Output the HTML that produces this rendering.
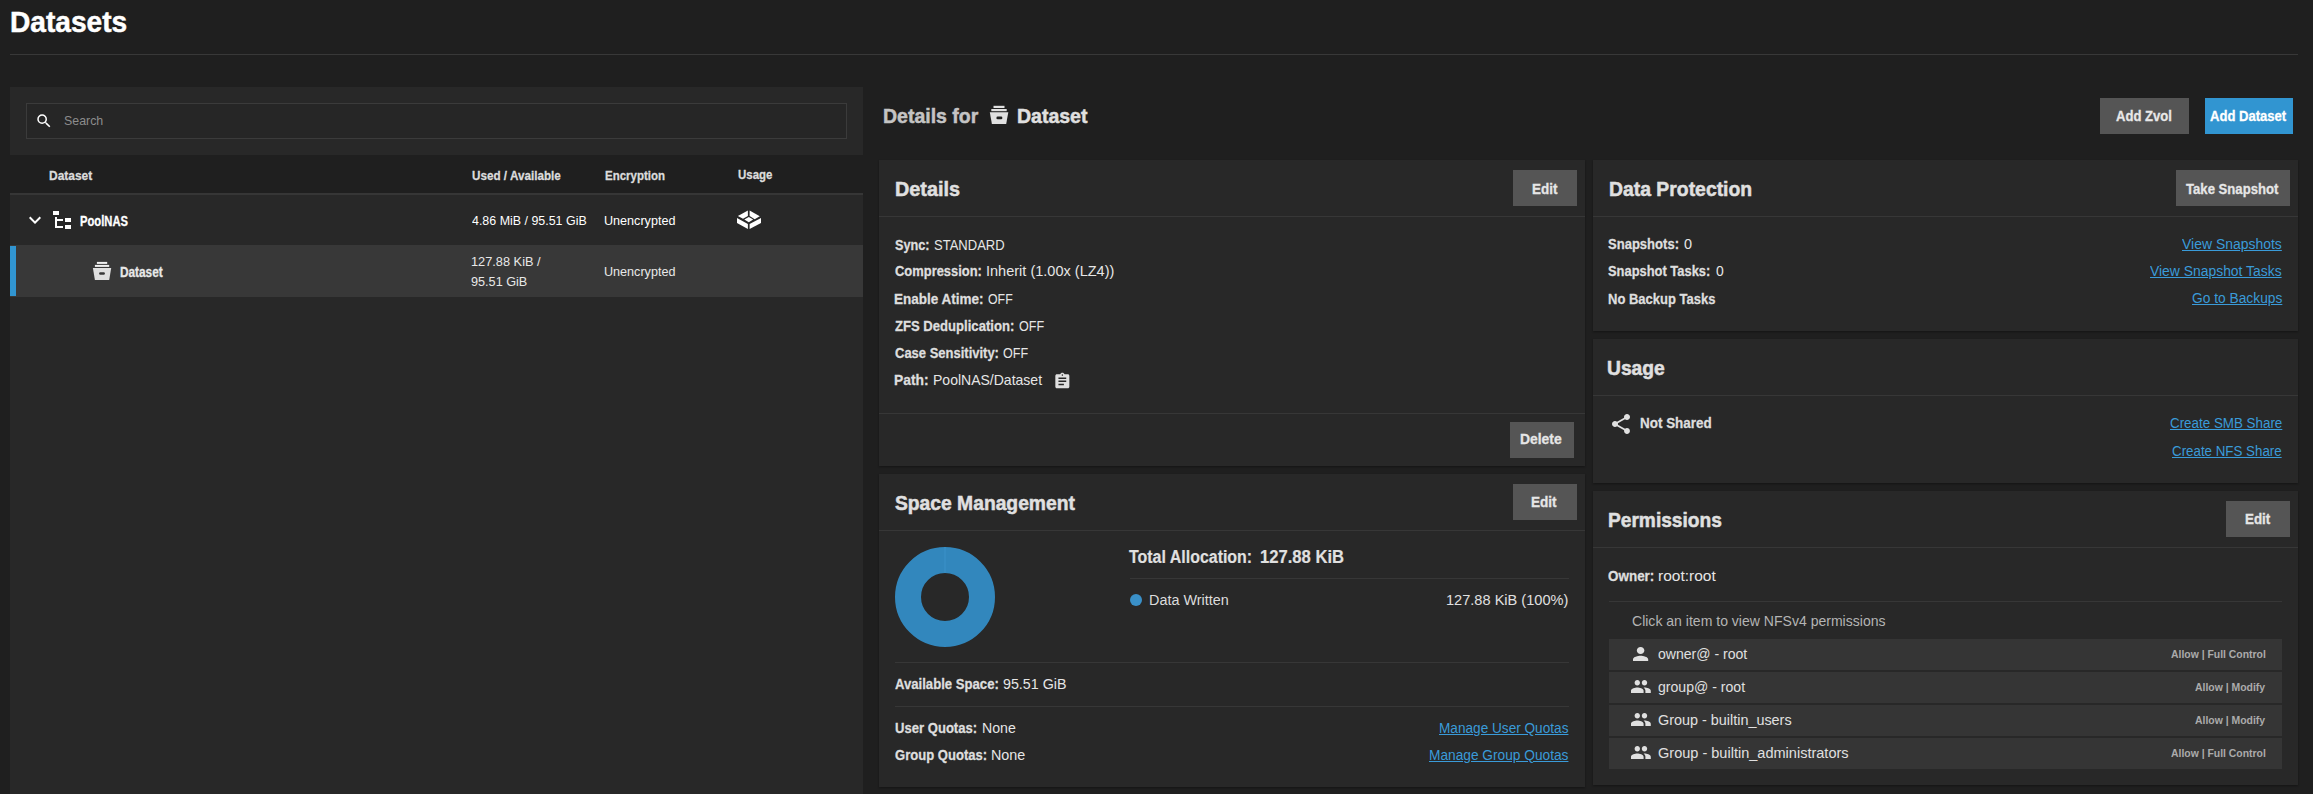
<!DOCTYPE html>
<html><head><meta charset="utf-8">
<style>
html,body{margin:0;padding:0;}
body{width:2313px;height:794px;overflow:hidden;background:#1f1f1f;position:relative;font-family:"Liberation Sans",sans-serif;}
.t{position:absolute;white-space:pre;transform-origin:0 0;}
.b{position:absolute;}
.card{position:absolute;background:#282828;box-shadow:0 1px 2px rgba(0,0,0,.35);}
.hr{position:absolute;height:1px;background:#373737;}
.btn{position:absolute;background:#555555;height:36px;}
svg{position:absolute;overflow:visible;}
</style></head><body>
<!-- title rule -->
<div class="hr" style="left:10px;top:54px;width:2288px;background:#383838"></div>
<!-- left panel -->
<div class="b" style="left:10px;top:87px;width:853px;height:707px;background:#282828"></div>
<div class="b" style="left:26px;top:103px;width:819px;height:34px;border:1px solid #3b3b3b;background:#262626"></div>
<div class="b" style="left:10px;top:155px;width:853px;height:38px;background:#1f1f1f"></div>
<div class="b" style="left:10px;top:193px;width:853px;height:2px;background:#363636"></div>
<div class="b" style="left:10px;top:245px;width:853px;height:52px;background:#383838"></div>
<div class="b" style="left:10px;top:246px;width:6px;height:50px;background:#3195d1"></div>
<!-- search icon -->
<svg style="left:34.5px;top:111.5px" width="18" height="18" viewBox="0 0 24 24"><path fill="#ffffff" d="M15.5 14h-.79l-.28-.27A6.471 6.471 0 0 0 16 9.5 6.5 6.5 0 1 0 9.5 16c1.61 0 3.09-.59 4.23-1.57l.27.28v.79l5 4.99L20.49 19l-4.99-5zm-6 0C7.01 14 5 11.99 5 9.5S7.01 5 9.5 5 14 7.01 14 9.5 11.99 14 9.5 14z"/></svg>
<!-- chevron -->
<svg style="left:23px;top:208px" width="24" height="24" viewBox="0 0 24 24"><path fill="#ffffff" d="M16.59 8.59L12 13.17 7.41 8.59 6 10l6 6 6-6z"/></svg>
<!-- file tree icon -->
<svg style="left:50px;top:208px" width="24" height="24" viewBox="0 0 24 24"><path fill="#ffffff" d="M3,3H9V7H3V3M15,10H21V14H15V10M15,17H21V21H15V17M13,13H7V18H13V20H7L5,20V9H7V11H13V13Z"/></svg>
<!-- dataset icon (row) -->
<svg style="left:0;top:0" width="1" height="1"><g fill="#e0e0e0">
<rect x="96.9" y="261.9" width="10.3" height="2" fill="#f0f0f0"/>
<rect x="94.9" y="264.9" width="14.3" height="2" fill="#f0f0f0"/>
<path d="M92.9 267.9H111.2L109.2 280H94.9Z"/>
</g><rect x="99.1" y="272.3" width="5.8" height="2.5" rx="1.2" fill="#383838"/></svg>
<!-- usage icon -->
<svg style="left:0;top:0" width="1" height="1"><g fill="#ffffff">
<path d="M737.9 216.1L747.9 210.5V216L743 218.8Z"/>
<path d="M749.6 210.5L759.8 216.3L754.7 219.2L749.6 216Z"/>
<path d="M744.3 219.5L748.8 216.9L753.2 219.5L748.8 222.2Z"/>
<path d="M737 218L747.9 223.9V229L737 222.9Z"/>
<path d="M749.6 223.9L761 218V222.9L749.6 229Z"/>
</g></svg>

<!-- details header icon -->
<svg style="left:0;top:0" width="1" height="1"><g fill="#e0e0e0">
<rect x="993.5" y="105.8" width="11" height="2.2"/>
<rect x="991.3" y="109" width="15.4" height="2.2"/>
<path d="M989.8 112.2H1008.3L1006.2 124H991.9Z"/>
</g><rect x="996.4" y="116.6" width="6" height="2.6" rx="1.3" fill="#1f1f1f"/></svg>

<!-- top buttons -->
<div class="btn" style="left:2100px;top:98px;width:89px"></div>
<div class="btn" style="left:2205px;top:98px;width:88px;background:#3195d1"></div>

<!-- cards -->
<div class="card" style="left:879px;top:160px;width:706px;height:306px"></div>
<div class="card" style="left:879px;top:474px;width:706px;height:313px"></div>
<div class="card" style="left:1593px;top:160px;width:705px;height:171px"></div>
<div class="card" style="left:1593px;top:339px;width:705px;height:144px"></div>
<div class="card" style="left:1593px;top:491px;width:705px;height:294px"></div>
<!-- card dividers -->
<div class="hr" style="left:879px;top:216px;width:706px"></div>
<div class="hr" style="left:879px;top:413px;width:706px"></div>
<div class="hr" style="left:879px;top:530px;width:706px"></div>
<div class="hr" style="left:1593px;top:216px;width:705px"></div>
<div class="hr" style="left:1593px;top:395px;width:705px"></div>
<div class="hr" style="left:1593px;top:547px;width:705px"></div>
<div class="hr" style="left:1130px;top:578px;width:439px"></div>
<div class="hr" style="left:895px;top:662px;width:674px"></div>
<div class="hr" style="left:895px;top:706px;width:674px"></div>
<div class="hr" style="left:1609px;top:601px;width:673px"></div>
<!-- card buttons -->
<div class="btn" style="left:1513px;top:170px;width:64px"></div>
<div class="btn" style="left:2176px;top:170px;width:114px"></div>
<div class="btn" style="left:1510px;top:422px;width:64px"></div>
<div class="btn" style="left:1513px;top:484px;width:64px"></div>
<div class="btn" style="left:2226px;top:501px;width:64px"></div>

<!-- clipboard icon -->
<svg style="left:1052.7px;top:372.2px" width="18.7" height="18.7" viewBox="0 0 24 24"><path fill="#e0e0e0" d="M19 3h-4.18C14.4 1.84 13.3 1 12 1c-1.3 0-2.4.84-2.82 2H5c-1.1 0-2 .9-2 2v14c0 1.1.9 2 2 2h14c1.1 0 2-.9 2-2V5c0-1.1-.9-2-2-2zm-7 0c.55 0 1 .45 1 1s-.45 1-1 1-1-.45-1-1 .45-1 1-1zm2 14H7v-2h7v2zm3-4H7v-2h10v2zm0-4H7V7h10v2z"/></svg>
<!-- share icon -->
<svg style="left:1608.7px;top:411.7px" width="24" height="24" viewBox="0 0 24 24"><path fill="#e0e0e0" d="M18 16.08c-.76 0-1.440.3-1.96.77L8.91 12.7c.05-.23.09-.46.09-.7s-.04-.47-.09-.7l7.05-4.11c.54.5 1.25.81 2.04.81 1.66 0 3-1.34 3-3s-1.340-3-3-3-3 1.34-3 3c0 .24.04.47.09.7L8.04 9.81C7.5 9.31 6.79 9 6 9c-1.66 0-3 1.34-3 3s1.34 3 3 3c.79 0 1.5-.31 2.04-.81l7.12 4.16c-.05.21-.08.43-.08.65 0 1.61 1.31 2.92 2.92 2.92 1.61 0 2.920-1.31 2.92-2.92s-1.31-2.92-2.92-2.92z"/></svg>

<!-- donut -->
<svg style="left:0;top:0" width="1" height="1">
<circle cx="945" cy="597" r="37" fill="none" stroke="#3287bd" stroke-width="26"/>
<rect x="944.5" y="547" width="1" height="26" fill="#3a91c9"/>
<circle cx="1136" cy="600" r="6" fill="#3a90c8"/>
</svg>

<!-- ACE rows -->
<div class="b" style="left:1609px;top:639px;width:673px;height:31px;background:#353535"></div>
<div class="b" style="left:1609px;top:672px;width:673px;height:31px;background:#353535"></div>
<div class="b" style="left:1609px;top:705px;width:673px;height:31px;background:#353535"></div>
<div class="b" style="left:1609px;top:738px;width:673px;height:31px;background:#353535"></div>
<!-- person icon -->
<svg style="left:1633px;top:646.6px" width="15.2" height="14" viewBox="4 4 16 16" preserveAspectRatio="none"><path fill="#e0e0e0" d="M12 12c2.21 0 4-1.79 4-4s-1.79-4-4-4-4 1.79-4 4 1.79 4 4 4zm0 2c-2.67 0-8 1.34-8 4v2h16v-2c0-2.66-5.330-4-8-4z" transform="translate(0 0)"/></svg>
<!-- group icons -->
<svg style="left:1630.8px;top:680px" width="19.8" height="13" viewBox="1 5 22 14" preserveAspectRatio="none"><path fill="#e0e0e0" d="M16 11c1.66 0 2.99-1.34 2.99-3S17.66 5 16 5c-1.66 0-3 1.34-3 3s1.34 3 3 3zm-8 0c1.66 0 2.99-1.34 2.99-3S9.66 5 8 5C6.34 5 5 6.34 5 8s1.34 3 3 3zm0 2c-2.33 0-7 1.17-7 3.5V19h14v-2.5c0-2.33-4.67-3.5-7-3.5zm8 0c-.29 0-.62.02-.97.05 1.16.84 1.970 1.97 1.97 3.45V19h6v-2.5c0-2.33-4.67-3.5-7-3.5z"/></svg>
<svg style="left:1630.8px;top:713px" width="19.8" height="13" viewBox="1 5 22 14" preserveAspectRatio="none"><path fill="#e0e0e0" d="M16 11c1.66 0 2.99-1.34 2.99-3S17.66 5 16 5c-1.660 0-3 1.34-3 3s1.34 3 3 3zm-8 0c1.66 0 2.99-1.34 2.99-3S9.66 5 8 5C6.34 5 5 6.34 5 8s1.34 3 3 3zm0 2c-2.33 0-7 1.17-7 3.5V19h14v-2.5c0-2.33-4.67-3.5-7-3.5zm8 0c-.29 0-.62.02-.97.05 1.16.84 1.97 1.97 1.97 3.45V19h6v-2.5c0-2.33-4.67-3.5-7-3.5z"/></svg>
<svg style="left:1630.8px;top:746px" width="19.8" height="13" viewBox="1 5 22 14" preserveAspectRatio="none"><path fill="#e0e0e0" d="M16 11c1.66 0 2.99-1.34 2.99-3S17.66 5 16 5c-1.66 0-3 1.34-3 3s1.34 3 3 3zm-8 0c1.66 0 2.99-1.34 2.99-3S9.66 5 8 5C6.34 5 5 6.34 5 8s1.34 3 3 3zm0 2c-2.33 0-7 1.17-7 3.5V19h14v-2.5c0-2.33-4.67-3.5-7-3.5zm8 0c-.29 0-.62.02-.97.05 1.16.84 1.97 1.97 1.97 3.45V19h6v-2.5c0-2.33-4.67-3.5-7-3.5z"/></svg>

<span class="t" style="left:10.40px;top:7.10px;font-size:30px;line-height:30px;font-weight:bold;color:#ffffff;transform:scaleX(0.9372);-webkit-text-stroke:0.5px #ffffff;">Datasets</span>
<span class="t" style="left:64.46px;top:113.90px;font-size:13px;line-height:13px;font-weight:normal;color:#8c8c8c;transform:scaleX(0.9515);">Search</span>
<span class="t" style="left:49.07px;top:168.70px;font-size:13.5px;line-height:13.5px;font-weight:bold;color:#dcdcdc;transform:scaleX(0.8868);-webkit-text-stroke:0.3px #dcdcdc;">Dataset</span>
<span class="t" style="left:472.29px;top:168.60px;font-size:13.5px;line-height:13.5px;font-weight:bold;color:#dcdcdc;transform:scaleX(0.8657);-webkit-text-stroke:0.3px #dcdcdc;">Used / Available</span>
<span class="t" style="left:605.11px;top:168.60px;font-size:13.5px;line-height:13.5px;font-weight:bold;color:#dcdcdc;transform:scaleX(0.8510);-webkit-text-stroke:0.3px #dcdcdc;">Encryption</span>
<span class="t" style="left:737.95px;top:168.30px;font-size:13.5px;line-height:13.5px;font-weight:bold;color:#dcdcdc;transform:scaleX(0.8492);-webkit-text-stroke:0.3px #dcdcdc;">Usage</span>
<span class="t" style="left:79.94px;top:213.80px;font-size:14px;line-height:14px;font-weight:bold;color:#ffffff;transform:scaleX(0.8020);-webkit-text-stroke:0.3px #ffffff;">PoolNAS</span>
<span class="t" style="left:471.66px;top:215.20px;font-size:12.5px;line-height:12.5px;font-weight:normal;color:#ffffff;transform:scaleX(0.9943);">4.86 MiB / 95.51 GiB</span>
<span class="t" style="left:603.78px;top:215.10px;font-size:12.5px;line-height:12.5px;font-weight:normal;color:#ffffff;transform:scaleX(1.0077);">Unencrypted</span>
<span class="t" style="left:119.61px;top:264.60px;font-size:14px;line-height:14px;font-weight:bold;color:#e8e8e8;transform:scaleX(0.8433);-webkit-text-stroke:0.3px #e8e8e8;">Dataset</span>
<span class="t" style="left:470.96px;top:256.10px;font-size:12.5px;line-height:12.5px;font-weight:normal;color:#e8e8e8;transform:scaleX(1.0217);">127.88 KiB /</span>
<span class="t" style="left:470.96px;top:276.00px;font-size:12.5px;line-height:12.5px;font-weight:normal;color:#e8e8e8;transform:scaleX(1.0126);">95.51 GiB</span>
<span class="t" style="left:603.78px;top:265.90px;font-size:12.5px;line-height:12.5px;font-weight:normal;color:#e8e8e8;transform:scaleX(1.0077);">Unencrypted</span>
<span class="t" style="left:883.44px;top:105.20px;font-size:21px;line-height:21px;font-weight:bold;color:#c4c4c4;transform:scaleX(0.9281);-webkit-text-stroke:0.5px #c4c4c4;">Details for</span>
<span class="t" style="left:1017.30px;top:105.20px;font-size:21px;line-height:21px;font-weight:bold;color:#e0e0e0;transform:scaleX(0.9287);-webkit-text-stroke:0.5px #e0e0e0;">Dataset</span>
<span class="t" style="left:2116.29px;top:107.50px;font-size:15.5px;line-height:15.5px;font-weight:bold;color:#e8e8e8;transform:scaleX(0.8425);-webkit-text-stroke:0.3px #e8e8e8;">Add Zvol</span>
<span class="t" style="left:2210.45px;top:107.60px;font-size:15.5px;line-height:15.5px;font-weight:bold;color:#ffffff;transform:scaleX(0.8427);-webkit-text-stroke:0.3px #ffffff;">Add Dataset</span>
<span class="t" style="left:895.28px;top:179.00px;font-size:20.5px;line-height:20.5px;font-weight:bold;color:#e0e0e0;transform:scaleX(0.9657);-webkit-text-stroke:0.5px #e0e0e0;">Details</span>
<span class="t" style="left:1608.63px;top:179.40px;font-size:20.5px;line-height:20.5px;font-weight:bold;color:#e0e0e0;transform:scaleX(0.9449);-webkit-text-stroke:0.5px #e0e0e0;">Data Protection</span>
<span class="t" style="left:1607.44px;top:358.00px;font-size:20.5px;line-height:20.5px;font-weight:bold;color:#e0e0e0;transform:scaleX(0.9380);-webkit-text-stroke:0.5px #e0e0e0;">Usage</span>
<span class="t" style="left:895.21px;top:493.00px;font-size:20.5px;line-height:20.5px;font-weight:bold;color:#e0e0e0;transform:scaleX(0.9399);-webkit-text-stroke:0.5px #e0e0e0;">Space Management</span>
<span class="t" style="left:1607.62px;top:509.80px;font-size:20.5px;line-height:20.5px;font-weight:bold;color:#e0e0e0;transform:scaleX(0.9340);-webkit-text-stroke:0.5px #e0e0e0;">Permissions</span>
<span class="t" style="left:1531.76px;top:180.80px;font-size:15.5px;line-height:15.5px;font-weight:bold;color:#e6e6e6;transform:scaleX(0.8696);-webkit-text-stroke:0.3px #e6e6e6;">Edit</span>
<span class="t" style="left:2186.29px;top:180.60px;font-size:15.5px;line-height:15.5px;font-weight:bold;color:#e6e6e6;transform:scaleX(0.8469);-webkit-text-stroke:0.3px #e6e6e6;">Take Snapshot</span>
<span class="t" style="left:1520.22px;top:431.00px;font-size:15.5px;line-height:15.5px;font-weight:bold;color:#e6e6e6;transform:scaleX(0.8956);-webkit-text-stroke:0.3px #e6e6e6;">Delete</span>
<span class="t" style="left:1531.42px;top:493.60px;font-size:15.5px;line-height:15.5px;font-weight:bold;color:#e6e6e6;transform:scaleX(0.8752);-webkit-text-stroke:0.3px #e6e6e6;">Edit</span>
<span class="t" style="left:2244.93px;top:510.80px;font-size:15.5px;line-height:15.5px;font-weight:bold;color:#e6e6e6;transform:scaleX(0.8633);-webkit-text-stroke:0.3px #e6e6e6;">Edit</span>
<span class="t" style="left:895.13px;top:236.70px;font-size:15px;line-height:15px;font-weight:bold;color:#dedede;transform:scaleX(0.8468);-webkit-text-stroke:0.3px #dedede;">Sync:</span>
<span class="t" style="left:933.78px;top:236.70px;font-size:15px;line-height:15px;font-weight:normal;color:#e6e6e6;transform:scaleX(0.8675);">STANDARD</span>
<span class="t" style="left:895.13px;top:263.10px;font-size:15px;line-height:15px;font-weight:bold;color:#dedede;transform:scaleX(0.8620);-webkit-text-stroke:0.3px #dedede;">Compression:</span>
<span class="t" style="left:985.69px;top:263.10px;font-size:15px;line-height:15px;font-weight:normal;color:#e6e6e6;transform:scaleX(0.9682);">Inherit (1.00x (LZ4))</span>
<span class="t" style="left:894.23px;top:290.80px;font-size:15px;line-height:15px;font-weight:bold;color:#dedede;transform:scaleX(0.9006);-webkit-text-stroke:0.3px #dedede;">Enable Atime:</span>
<span class="t" style="left:988.16px;top:290.80px;font-size:15px;line-height:15px;font-weight:normal;color:#e6e6e6;transform:scaleX(0.8223);">OFF</span>
<span class="t" style="left:895.13px;top:317.80px;font-size:15px;line-height:15px;font-weight:bold;color:#dedede;transform:scaleX(0.8727);-webkit-text-stroke:0.3px #dedede;">ZFS Deduplication:</span>
<span class="t" style="left:1019.00px;top:317.80px;font-size:15px;line-height:15px;font-weight:normal;color:#e6e6e6;transform:scaleX(0.8381);">OFF</span>
<span class="t" style="left:895.13px;top:344.80px;font-size:15px;line-height:15px;font-weight:bold;color:#dedede;transform:scaleX(0.8658);-webkit-text-stroke:0.3px #dedede;">Case Sensitivity:</span>
<span class="t" style="left:1003.00px;top:344.80px;font-size:15px;line-height:15px;font-weight:normal;color:#e6e6e6;transform:scaleX(0.8381);">OFF</span>
<span class="t" style="left:894.22px;top:371.80px;font-size:15px;line-height:15px;font-weight:bold;color:#dedede;transform:scaleX(0.9229);-webkit-text-stroke:0.3px #dedede;">Path:</span>
<span class="t" style="left:932.75px;top:371.80px;font-size:15px;line-height:15px;font-weight:normal;color:#e6e6e6;transform:scaleX(0.9342);">PoolNAS/Dataset</span>
<span class="t" style="left:1608.45px;top:236.10px;font-size:15px;line-height:15px;font-weight:bold;color:#dedede;transform:scaleX(0.8690);-webkit-text-stroke:0.3px #dedede;">Snapshots:</span>
<span class="t" style="left:1684.00px;top:236.10px;font-size:15px;line-height:15px;font-weight:normal;color:#e6e6e6;transform:scaleX(0.9640);">0</span>
<span class="t" style="left:1608.45px;top:262.80px;font-size:15px;line-height:15px;font-weight:bold;color:#dedede;transform:scaleX(0.8601);-webkit-text-stroke:0.3px #dedede;">Snapshot Tasks:</span>
<span class="t" style="left:1715.66px;top:262.80px;font-size:15px;line-height:15px;font-weight:normal;color:#e6e6e6;transform:scaleX(0.9256);">0</span>
<span class="t" style="left:1607.58px;top:291.00px;font-size:15px;line-height:15px;font-weight:bold;color:#dedede;transform:scaleX(0.8667);-webkit-text-stroke:0.3px #dedede;">No Backup Tasks</span>
<span class="t" style="left:2182.16px;top:236.90px;font-size:14px;line-height:14px;font-weight:normal;color:#3a9bd9;transform:scaleX(0.9971);text-decoration:underline;text-underline-offset:0.5px">View Snapshots</span>
<span class="t" style="left:2150.16px;top:263.80px;font-size:14px;line-height:14px;font-weight:normal;color:#3a9bd9;transform:scaleX(0.9927);text-decoration:underline;text-underline-offset:0.5px">View Snapshot Tasks</span>
<span class="t" style="left:2191.68px;top:291.40px;font-size:14px;line-height:14px;font-weight:normal;color:#3a9bd9;transform:scaleX(0.9837);text-decoration:underline;text-underline-offset:0.5px">Go to Backups</span>
<span class="t" style="left:1639.74px;top:415.30px;font-size:15.5px;line-height:15.5px;font-weight:bold;color:#dedede;transform:scaleX(0.8675);-webkit-text-stroke:0.3px #dedede;">Not Shared</span>
<span class="t" style="left:2169.50px;top:415.70px;font-size:14px;line-height:14px;font-weight:normal;color:#3a9bd9;transform:scaleX(0.9558);text-decoration:underline;text-underline-offset:0.5px">Create SMB Share</span>
<span class="t" style="left:2172.16px;top:443.50px;font-size:14px;line-height:14px;font-weight:normal;color:#3a9bd9;transform:scaleX(0.9521);text-decoration:underline;text-underline-offset:0.5px">Create NFS Share</span>
<span class="t" style="left:1129.48px;top:548.00px;font-size:18px;line-height:18px;font-weight:bold;color:#e0e0e0;transform:scaleX(0.8862);-webkit-text-stroke:0.15px #e0e0e0;">Total Allocation:</span>
<span class="t" style="left:1260.40px;top:548.00px;font-size:18px;line-height:18px;font-weight:bold;color:#e0e0e0;transform:scaleX(0.9240);-webkit-text-stroke:0.15px #e0e0e0;">127.88 KiB</span>
<span class="t" style="left:1148.97px;top:592.80px;font-size:14px;line-height:14px;font-weight:normal;color:#dcdcdc;transform:scaleX(1.0273);">Data Written</span>
<span class="t" style="left:1446.03px;top:592.00px;font-size:15px;line-height:15px;font-weight:normal;color:#e0e0e0;transform:scaleX(0.9716);">127.88 KiB (100%)</span>
<span class="t" style="left:895.13px;top:676.00px;font-size:15px;line-height:15px;font-weight:bold;color:#dedede;transform:scaleX(0.8747);-webkit-text-stroke:0.3px #dedede;">Available Space:</span>
<span class="t" style="left:1002.78px;top:676.00px;font-size:15px;line-height:15px;font-weight:normal;color:#e6e6e6;transform:scaleX(0.9509);">95.51 GiB</span>
<span class="t" style="left:895.13px;top:720.10px;font-size:15px;line-height:15px;font-weight:bold;color:#dedede;transform:scaleX(0.8719);-webkit-text-stroke:0.3px #dedede;">User Quotas:</span>
<span class="t" style="left:981.56px;top:720.10px;font-size:15px;line-height:15px;font-weight:normal;color:#e6e6e6;transform:scaleX(0.9422);">None</span>
<span class="t" style="left:895.13px;top:746.70px;font-size:15px;line-height:15px;font-weight:bold;color:#dedede;transform:scaleX(0.8705);-webkit-text-stroke:0.3px #dedede;">Group Quotas:</span>
<span class="t" style="left:990.54px;top:746.70px;font-size:15px;line-height:15px;font-weight:normal;color:#e6e6e6;transform:scaleX(0.9560);">None</span>
<span class="t" style="left:1438.59px;top:720.70px;font-size:14px;line-height:14px;font-weight:normal;color:#3a9bd9;transform:scaleX(0.9727);text-decoration:underline;text-underline-offset:0.5px">Manage User Quotas</span>
<span class="t" style="left:1428.58px;top:747.50px;font-size:14px;line-height:14px;font-weight:normal;color:#3a9bd9;transform:scaleX(0.9791);text-decoration:underline;text-underline-offset:0.5px">Manage Group Quotas</span>
<span class="t" style="left:1608.45px;top:567.70px;font-size:15px;line-height:15px;font-weight:bold;color:#dedede;transform:scaleX(0.8964);-webkit-text-stroke:0.3px #dedede;">Owner:</span>
<span class="t" style="left:1658.29px;top:567.70px;font-size:15px;line-height:15px;font-weight:normal;color:#e6e6e6;transform:scaleX(1.0335);">root:root</span>
<span class="t" style="left:1631.96px;top:613.00px;font-size:15px;line-height:15px;font-weight:normal;color:#b4b4b4;transform:scaleX(0.9358);">Click an item to view NFSv4 permissions</span>
<span class="t" style="left:1658.32px;top:647.30px;font-size:14px;line-height:14px;font-weight:normal;color:#e0e0e0;transform:scaleX(1.0037);">owner@ - root</span>
<span class="t" style="left:2170.68px;top:649.30px;font-size:11.5px;line-height:11.5px;font-weight:bold;color:#ababab;transform:scaleX(0.9053);-webkit-text-stroke:0;">Allow | Full Control</span>
<span class="t" style="left:1657.62px;top:680.30px;font-size:14px;line-height:14px;font-weight:normal;color:#e0e0e0;transform:scaleX(1.0061);">group@ - root</span>
<span class="t" style="left:2194.68px;top:682.30px;font-size:11.5px;line-height:11.5px;font-weight:bold;color:#ababab;transform:scaleX(0.9071);-webkit-text-stroke:0;">Allow | Modify</span>
<span class="t" style="left:1657.62px;top:713.30px;font-size:14px;line-height:14px;font-weight:normal;color:#e0e0e0;transform:scaleX(1.0279);">Group - builtin_users</span>
<span class="t" style="left:2194.68px;top:715.30px;font-size:11.5px;line-height:11.5px;font-weight:bold;color:#ababab;transform:scaleX(0.9071);-webkit-text-stroke:0;">Allow | Modify</span>
<span class="t" style="left:1657.62px;top:746.30px;font-size:14px;line-height:14px;font-weight:normal;color:#e0e0e0;transform:scaleX(1.0378);">Group - builtin_administrators</span>
<span class="t" style="left:2170.68px;top:748.30px;font-size:11.5px;line-height:11.5px;font-weight:bold;color:#ababab;transform:scaleX(0.9053);-webkit-text-stroke:0;">Allow | Full Control</span>
</body></html>
